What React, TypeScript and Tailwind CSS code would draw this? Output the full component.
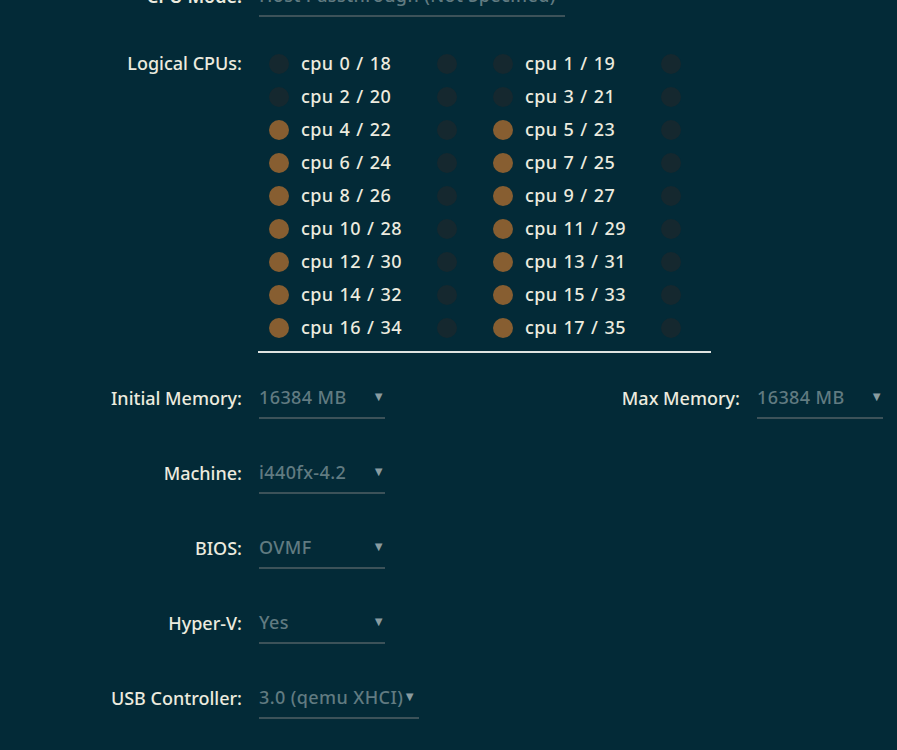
import React from "react";

const labelCls = "w-[242px] shrink-0 text-right text-[#ecebdf]";
const valueCls = "tracking-[0.4px] text-[#617b81]";

function Select({ value, wide = false }: { value: string; wide?: boolean }) {
  return (
    <div
      className={`flex h-[42px] items-center border-b-2 border-[#3c5259] ${
        wide ? "w-[160px]" : "w-[126px] justify-between"
      }`}
    >
      <span className={valueCls}>{value}</span>
      <span className="text-[13px] text-[#8a9ca0]">▼</span>
    </div>
  );
}

function Field({ label, children }: { label: string; children: React.ReactNode }) {
  return (
    <div className="flex items-center gap-[17px]">
      <div className={labelCls}>{label}</div>
      {children}
    </div>
  );
}

function Dot({ on }: { on: boolean }) {
  return (
    <span
      className={`h-[20px] w-[20px] shrink-0 rounded-full ${on ? "bg-[#875e31]" : "bg-[#15282f]"}`}
    />
  );
}

function CpuPair({ cpu, on }: { cpu: number; on: boolean }) {
  return (
    <div className="flex h-[33px] w-[224px] items-center">
      <Dot on={on} />
      <span className="ml-[12px] w-[136px] tracking-[0.4px] [word-spacing:1px] text-[#ecebdf]">
        cpu {cpu} / {cpu + 18}
      </span>
      <Dot on={false} />
    </div>
  );
}

export default function App() {
  const rows = Array.from({ length: 9 }, (_, i) => i * 2);

  return (
    <div
      className="h-[750px] w-full overflow-hidden bg-[#032a37] text-[18px] font-medium"
      style={{ fontFamily: '"Noto Sans", "Open Sans", sans-serif' }}
    >
      <div className="-mt-[25px] flex flex-col">
        <div className="flex items-center gap-[17px]">
          <div className={`${labelCls} font-semibold`}>CPU Mode:</div>
          <div className="flex h-[42px] w-[306px] items-center border-b-2 border-[#3c5259]">
            <span className={valueCls}>Host Passthrough (Not Specified)</span>
          </div>
        </div>

        <div className="mt-[30px] flex items-start gap-[17px]">
          <div className={`${labelCls} flex h-[33px] items-center justify-end`}>Logical CPUs:</div>
          <div className="ml-[-1px] flex flex-col">
            <div className="flex flex-col pl-[11px]">
              {rows.map((n) => (
                <div key={n} className="flex">
                  <CpuPair cpu={n} on={n >= 4} />
                  <CpuPair cpu={n + 1} on={n >= 4} />
                </div>
              ))}
            </div>
            <div className="mt-[7px] h-[2px] w-[453px] bg-[#dfe3e0]" />
          </div>
        </div>

        <div className="mt-[24px] flex items-center pr-[14px]">
          <Field label="Initial Memory:">
            <Select value="16384 MB" />
          </Field>
          <div className="ml-auto flex items-center gap-[17px]">
            <div className="text-[#ecebdf]">Max Memory:</div>
            <Select value="16384 MB" />
          </div>
        </div>

        <div className="mt-[33px] flex flex-col gap-[33px]">
          <Field label="Machine:">
            <Select value="i440fx-4.2" />
          </Field>
          <Field label="BIOS:">
            <Select value="OVMF" />
          </Field>
          <Field label="Hyper-V:">
            <Select value="Yes" />
          </Field>
          <Field label="USB Controller:">
            <Select value="3.0 (qemu XHCI)" wide />
          </Field>
        </div>
      </div>
    </div>
  );
}
